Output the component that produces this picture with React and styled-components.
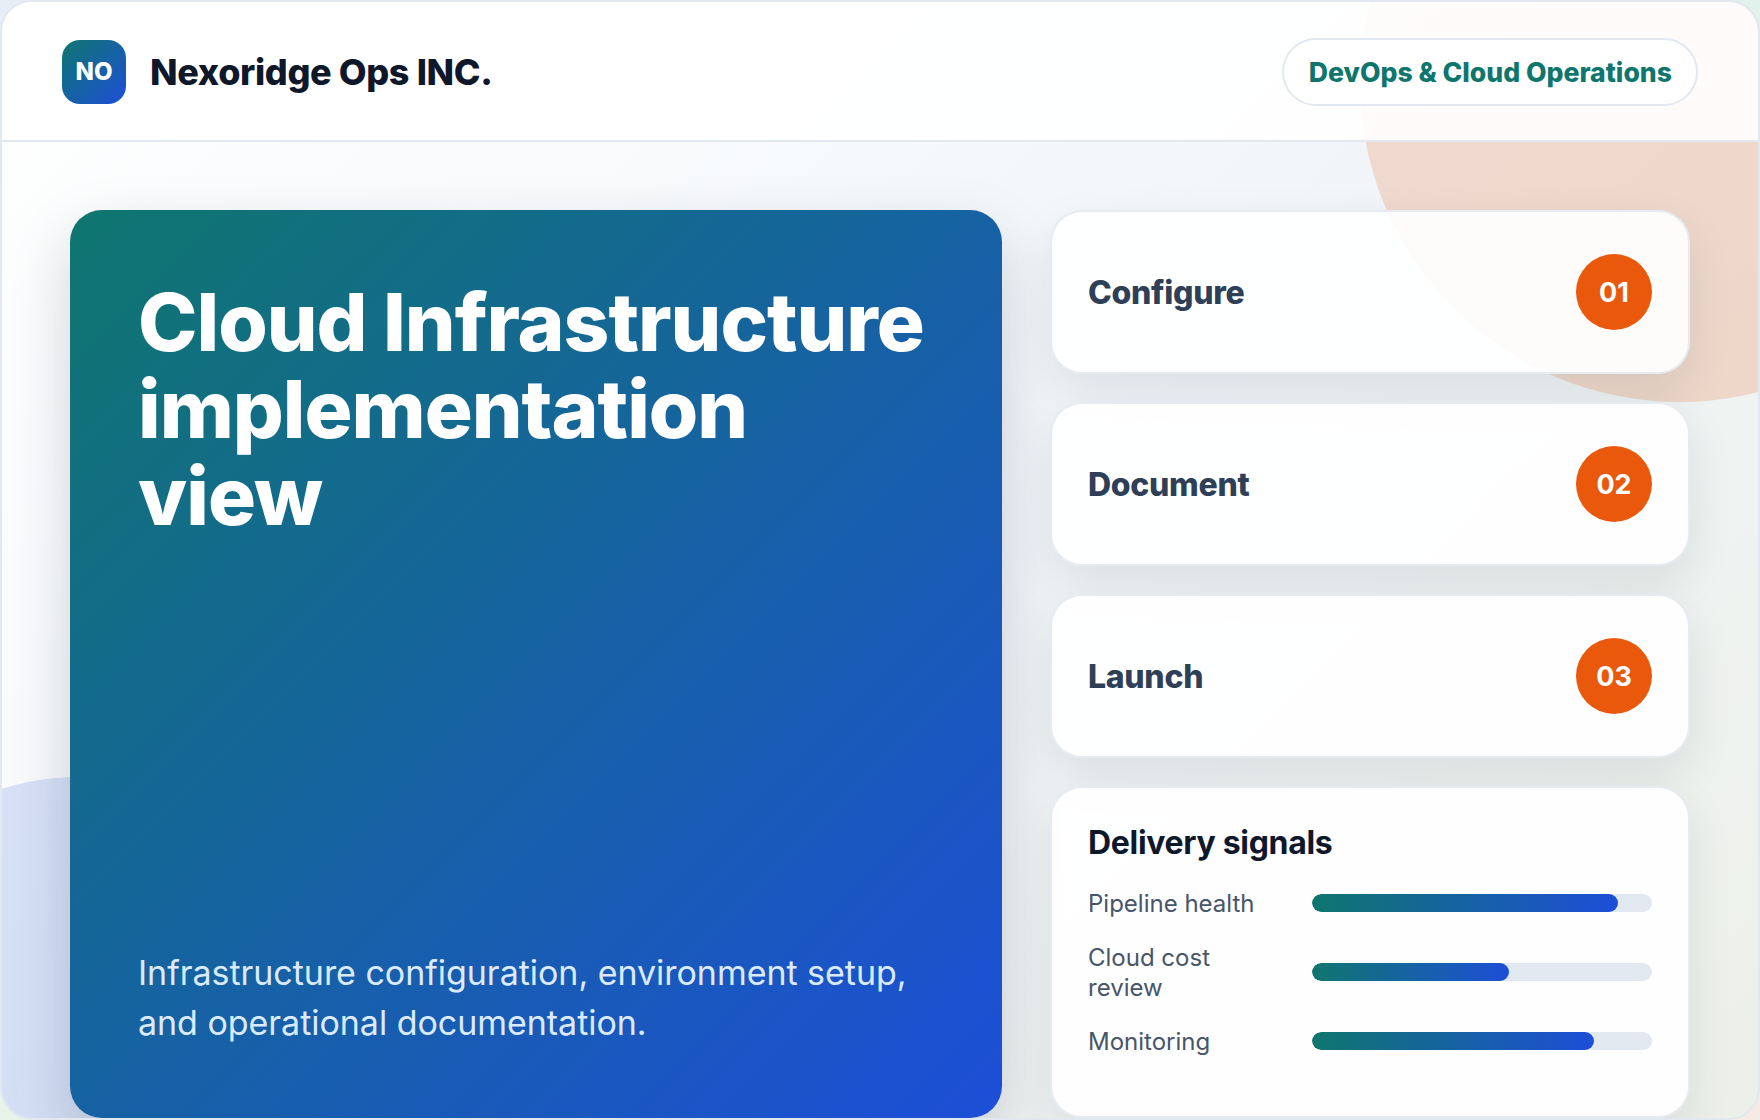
import React from "react"
import styled, { createGlobalStyle } from "styled-components"

const GlobalStyle = createGlobalStyle`
  html, body {
    margin: 0;
    padding: 0;
    background:
      radial-gradient(circle at 0 0, #e8eef6 0, #e8eef6 60px, transparent 61px),
      radial-gradient(circle at 100% 0, #e3f1ed 0, #e3f1ed 60px, transparent 61px),
      radial-gradient(circle at 0 100%, #e8f3e9 0, #e8f3e9 60px, transparent 61px),
      radial-gradient(circle at 100% 100%, #f6ebe4 0, #f6ebe4 60px, transparent 61px),
      #e2e8f0;
    min-height: 1120px;
  }
  * {
    box-sizing: border-box;
  }
`

const Frame = styled.div`
  position: relative;
  width: 1760px;
  height: 1120px;
  overflow: hidden;
  border: 2px solid #e2e8f0;
  border-radius: 32px;
  background: linear-gradient(135deg, #ffffff 0%, #f1f5f9 55%, #edf0e9 100%);
  font-family: Inter, "Liberation Sans", sans-serif;
`

const Blob = styled.div`
  position: absolute;
  border-radius: 50%;
  width: ${(p) => p.$size}px;
  height: ${(p) => p.$size}px;
  top: ${(p) => p.$top}px;
  left: ${(p) => p.$left}px;
  background: ${(p) => p.$color};
`

const Header = styled.header`
  position: relative;
  height: 140px;
  padding: 1px 60px 0;
  display: flex;
  align-items: center;
  justify-content: space-between;
  background: rgba(255, 255, 255, 0.9);
  border-bottom: 2px solid #e2e8f0;
`

const Brand = styled.div`
  display: flex;
  align-items: center;
  gap: 24px;
`

const Logo = styled.div`
  width: 64px;
  height: 64px;
  border-radius: 18px;
  display: flex;
  align-items: center;
  justify-content: center;
  background: linear-gradient(135deg, #0f766e, #1d4ed8);
  color: #fff;
  font-size: 24px;
  font-weight: 800;
`

const BrandName = styled.div`
  font-size: 36px;
  font-weight: 800;
  color: #0f172a;
  letter-spacing: -0.01em;
`

const Pill = styled.div`
  height: 68px;
  padding: 1px 24px 0 25px;
  display: flex;
  align-items: center;
  border: 2px solid #e2e8f0;
  border-radius: 34px;
  background: #fff;
  color: #0f766e;
  font-size: 26.6px;
  font-weight: 800;
`

const Main = styled.main`
  position: relative;
  display: grid;
  grid-template-columns: 932px 640px;
  column-gap: 48px;
  padding: 68px 68px 0;
`

const Hero = styled.section`
  height: 908px;
  padding: 68px 68px 70px;
  border-radius: 32px;
  display: flex;
  flex-direction: column;
  justify-content: space-between;
  background: linear-gradient(135deg, #0f766e, #1d4ed8);
  box-shadow: 0 24px 60px rgba(15, 23, 42, 0.18);
  color: #fff;
`

const HeroTitle = styled.h1`
  margin: 0;
  font-size: 80px;
  line-height: 87px;
  font-weight: 800;
  letter-spacing: -1px;
`

const HeroText = styled.p`
  margin: 0;
  font-size: 34px;
  line-height: 50px;
  letter-spacing: -0.001em;
  color: #dbeafe;
`

const Side = styled.div`
  display: flex;
  flex-direction: column;
  gap: 28px;
`

const Card = styled.div`
  border: 2px solid rgba(226, 232, 240, 0.85);
  border-radius: 32px;
  background: rgba(255, 255, 255, 0.92);
  box-shadow: 0 18px 44px rgba(15, 50, 60, 0.1);
`

const StepCard = styled(Card)`
  height: 164px;
  padding: 0 36px;
  display: flex;
  align-items: center;
  justify-content: space-between;
`

const StepName = styled.div`
  font-size: 32px;
  font-weight: 800;
  letter-spacing: -0.3px;
  color: #2f3f57;
`

const StepNumber = styled.div`
  width: 76px;
  height: 76px;
  border-radius: 50%;
  display: flex;
  align-items: center;
  justify-content: center;
  background: #ea580c;
  color: #fff;
  font-size: 27px;
  font-weight: 700;
`

const SignalsCard = styled(Card)`
  height: 332px;
  padding: 35px 36px;
`

const SignalsTitle = styled.h2`
  margin: 0 0 24px;
  font-size: 32px;
  line-height: 40px;
  font-weight: 700;
  letter-spacing: -0.01em;
  color: #0f172a;
`

const SignalList = styled.div`
  display: flex;
  flex-direction: column;
  gap: 22px;
`

const SignalRow = styled.div`
  display: grid;
  grid-template-columns: 190px 1fr;
  column-gap: 34px;
  align-items: center;
`

const SignalLabel = styled.span`
  padding-top: 2px;
  font-size: 24px;
  line-height: 30px;
  color: #475569;
`

const Track = styled.div`
  height: 18px;
  border-radius: 9px;
  background: #e2e8f0;
  overflow: hidden;
`

const Fill = styled.div`
  height: 100%;
  border-radius: 9px;
  background: linear-gradient(90deg, #0f766e, #1d4ed8);
`

const steps = [
  { name: "Configure", num: "01" },
  { name: "Document", num: "02" },
  { name: "Launch", num: "03" },
]

const signals = [
  { label: "Pipeline health", value: 90 },
  { label: "Cloud cost review", value: 58 },
  { label: "Monitoring", value: 83 },
]

export default function App() {
  return (
    <>
      <GlobalStyle />
      <Frame>
        <Blob $size={640} $top={-240} $left={1358} $color="rgba(234, 88, 12, 0.18)" />
        <Blob $size={520} $top={775} $left={-183} $color="rgba(29, 78, 216, 0.15)" />
        <Header>
          <Brand>
            <Logo>NO</Logo>
            <BrandName>Nexoridge Ops INC.</BrandName>
          </Brand>
          <Pill>DevOps &amp; Cloud Operations</Pill>
        </Header>
        <Main>
          <Hero>
            <HeroTitle>Cloud Infrastructure implementation view</HeroTitle>
            <HeroText>Infrastructure configuration, environment setup, and operational documentation.</HeroText>
          </Hero>
          <Side>
            {steps.map((step) => (
              <StepCard key={step.num}>
                <StepName>{step.name}</StepName>
                <StepNumber>{step.num}</StepNumber>
              </StepCard>
            ))}
            <SignalsCard>
              <SignalsTitle>Delivery signals</SignalsTitle>
              <SignalList>
                {signals.map((signal) => (
                  <SignalRow key={signal.label}>
                    <SignalLabel>{signal.label}</SignalLabel>
                    <Track>
                      <Fill style={{ width: `${signal.value}%` }} />
                    </Track>
                  </SignalRow>
                ))}
              </SignalList>
            </SignalsCard>
          </Side>
        </Main>
      </Frame>
    </>
  )
}
